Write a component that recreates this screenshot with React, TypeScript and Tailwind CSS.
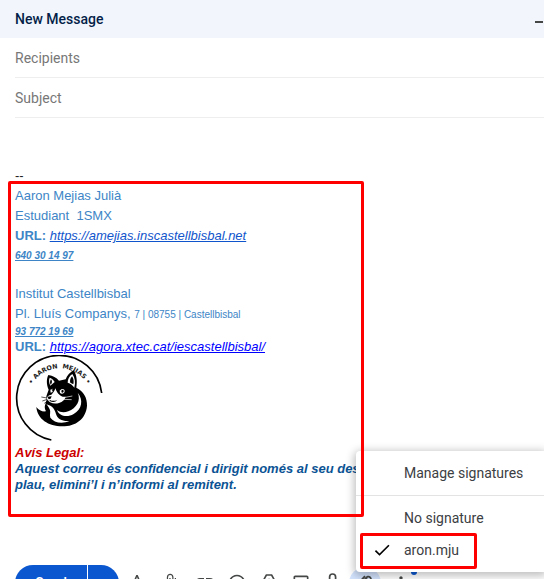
import type { ReactNode } from "react";
import {
  MdAttachFile,
  MdCheck,
  MdInsertLink,
  MdMoreVert,
  MdOutlineImage,
  MdSentimentSatisfiedAlt,
  MdTextFormat,
} from "react-icons/md";

function DriveIcon() {
  return (
    <svg viewBox="0 0 20 20" className="size-5" fill="none" stroke="currentColor" strokeWidth="1.6">
      <path d="M7.4 2h5.2l5.2 9.4-2.6 4.8H4.8l-2.6-4.8zM10 6.4 6.6 12.6h6.8z" strokeLinejoin="round" />
    </svg>
  );
}

function LockIcon() {
  return (
    <svg viewBox="0 0 20 20" className="size-5" fill="none" stroke="currentColor" strokeWidth="1.7">
      <path d="M6.6 8V4a3 3 0 0 1 6 0v4M4 8h11.5v9H4z" />
    </svg>
  );
}

function PenIcon() {
  return (
    <svg viewBox="0 0 20 20" className="size-5" fill="none" stroke="currentColor" strokeWidth="1.8">
      <path d="M4 12.5 10.5 5.5C12 3.6 13.6 3 15 4.2S16.2 7 14.8 8.6L8.5 15 4 16zM6.2 7.2 10 3.2" />
      <path d="M11 5.5 14.5 8.8" />
    </svg>
  );
}

const tools: { name: string; icon: ReactNode; className: string }[] = [
  { name: "Formatting options", icon: <MdTextFormat size={24} />, className: "ml-0.5" },
  { name: "Attach files", icon: <MdAttachFile size={20} />, className: "ml-0.5" },
  { name: "Insert link", icon: <MdInsertLink size={24} />, className: "ml-0.5" },
  { name: "Insert emoji", icon: <MdSentimentSatisfiedAlt size={20} />, className: "" },
  { name: "Insert files using Drive", icon: <DriveIcon />, className: "" },
  { name: "Insert photo", icon: <MdOutlineImage size={20} />, className: "" },
  { name: "Toggle confidential mode", icon: <LockIcon />, className: "" },
  { name: "Insert signature", icon: <PenIcon />, className: "rounded-full bg-[#d3e3fd]" },
  { name: "More options", icon: <MdMoreVert size={20} />, className: "ml-1" },
];

function CatLogo() {
  return (
    <svg viewBox="16 14 264 264" className="block size-[88px]" role="img" aria-label="Aaron Mejias">
      <path d="M276 128A128 128 0 1 0 125 269" fill="none" stroke="#000" strokeWidth="5" />
      <path id="ring" d="M54 150A96 96 0 0 1 246 150" fill="none" />
      <text
        fontSize="19"
        fontWeight="700"
        fontFamily="DejaVu Sans, sans-serif"
        fill="#222"
        className="whitespace-pre"
      >
        <textPath href="#ring" startOffset="50%" textAnchor="middle">• AARON  MEJIAS •</textPath>
      </text>
      <g transform="translate(60 36)">
        <path
          d="M56 38C70 40 80 46 88 55L108 51C112 39 121 30 132 24C142 40 143 58 140 76C162 86 173 107 172 130C169 170 138 192 98 192C56 192 23 170 20 134C28 144 38 149 49 147C45 140 44 133 47 126L51 112L50 102L57 82C50 66 50 50 56 38Z"
          fill="#000"
        />
        {/* ears */}
        <path d="M60 46C67 48 72 53 75 59L62 70C58 62 57 54 60 46Z" fill="#fff" />
        <path d="M64 51C68 56 68 62 63 67C60 62 61 56 64 51Z" fill="#000" />
        <path d="M128 35C118 42 114 51 114 61C122 63 129 68 134 76C138 60 136 46 128 35Z" fill="#fff" />
        <path d="M127 42C121 49 120 56 122 61L131 66C133 57 132 49 127 42Z" fill="#000" />
        {/* face */}
        <path
          d="M77 78C75 87 69 93 65 97C56 98 51 104 51 109C57 121 73 127 88 122C99 118 106 111 108 103C96 106 84 97 77 78Z"
          fill="#fff"
        />
        <path d="M90 85C96 78 104 79 105 86C105 94 96 96 91 92Z" fill="#fff" />
        <path d="M96 83Q103 81 102 88Q98 94 95 89Z" fill="#000" />
        <path d="M62 82L70 79L69 89L63 91Z" fill="#fff" />
        <path d="M66 82L70 80L69 88Z" fill="#000" />
        <path d="M53 103L66 102L63 109L57 111ZM60 112Q71 119 83 112Q75 123 60 116Z" fill="#000" />
        {/* chest and tail */}
        <path
          d="M144 91C155 114 140 137 116 147C102 152 91 150 82 143C89 162 113 166 132 155C157 141 162 112 144 91Z"
          fill="#fff"
        />
        <path
          d="M50 126C69 130 76 143 79 155C83 170 99 178 119 176C96 186 72 180 62 166C59 157 64 148 60 141C57 134 54 130 50 126Z"
          fill="#fff"
        />
        <path d="M102 106L128 101M101 111L126 112" stroke="#fff" strokeWidth="2" />
        <path d="M52 107L35 104M53 111L38 116M56 115L44 123" stroke="#000" strokeWidth="2" />
      </g>
    </svg>
  );
}

function Signature() {
  return (
    <div className="relative mt-0.5 whitespace-nowrap text-[13px] leading-5 text-[#3d85c6]">
      <div>Aaron Mejias Julià</div>
      <div className="whitespace-pre">Estudiant  1SMX</div>
      <div>
        <b>URL: </b>
        <a href="https://amejias.inscastellbisbal.net" className="italic text-[#1155cc] underline">
          https://amejias.inscastellbisbal.net
        </a>
      </div>
      <div className="text-[10px] font-bold italic underline">640 30 14 97</div>
      <div className="mt-[18px]">Institut Castellbisbal</div>
      <div>
        Pl. Lluís Companys, <span className="text-[10px]">7 | 08755 | Castellbisbal</span>
      </div>
      <div className="text-[10px] font-bold italic leading-[14px] underline">93 772 19 69</div>
      <div className="leading-4">
        <b>URL: </b>
        <a href="https://agora.xtec.cat/iescastellbisbal/" className="italic text-[#0000ff] underline">
          https://agora.xtec.cat/iescastellbisbal/
        </a>
      </div>
      <CatLogo />
      <div className="mt-0.5 font-bold italic leading-4 text-[#cc0000]">Avís Legal:</div>
      <div className="font-bold italic leading-4 text-[#0b5394]">
        Aquest correu és confidencial i dirigit només al seu des
        <br />
        plau, elimini’l i n’informi al remitent.
      </div>
      <div className="pointer-events-none absolute -left-[7px] -top-[5px] -bottom-6 z-20 w-[356px] rounded-xs border-3 border-[#ff0000]" />
    </div>
  );
}

function SignatureMenu() {
  return (
    <div
      role="menu"
      className="absolute bottom-[7px] right-0 z-10 w-[188px] rounded-l bg-white text-sm text-[#3c4043] shadow-[0_2px_8px_2px_rgba(0,0,0,0.25)]"
    >
      <div className="border-b border-[#e3e3e3] py-1.5">
        <button role="menuitem" className="flex h-8 w-full items-center whitespace-nowrap pl-12">
          Manage signatures
        </button>
      </div>
      <div className="py-1.5">
        <button role="menuitemradio" aria-checked="false" className="flex h-8 w-full items-center pl-12">
          No signature
        </button>
        <div className="relative">
          <button role="menuitemradio" aria-checked="true" className="flex h-8 w-full items-center pl-4">
            <MdCheck size={20} className="mr-3 text-black" />
            aron.mju
          </button>
          <div className="pointer-events-none absolute -bottom-[3px] -top-px left-1 w-[117px] rounded-xs border-3 border-[#ff0000]" />
        </div>
      </div>
    </div>
  );
}

export default function App() {
  return (
    <div className="relative flex h-screen flex-col overflow-hidden bg-white font-[Roboto,sans-serif]">
      <header className="flex h-[38px] shrink-0 items-center justify-between bg-[#f2f6fc] pl-[15px] pr-px">
        <h1 className="text-sm font-medium text-[#041e49]">New Message</h1>
        <button aria-label="Minimize" className="flex h-5 w-2 items-center pt-1.5">
          <span className="h-0.5 w-full bg-[#444746]" />
        </button>
      </header>
      <div className="shrink-0 pl-[15px]">
        <input
          aria-label="Recipients"
          placeholder="Recipients"
          className="block h-10 w-full border-b border-[#eeeeee] text-sm outline-none placeholder:text-[#777777]"
        />
        <input
          aria-label="Subject"
          placeholder="Subject"
          className="block h-10 w-full border-b border-[#eeeeee] text-sm outline-none placeholder:text-[#777777]"
        />
      </div>
      <main className="h-[447px] shrink-0 px-[15px] pt-[50px] font-['Liberation_Sans',sans-serif]">
        <div className="text-[13px] leading-4 text-[#222222]">--</div>
        <Signature />
      </main>
      <footer className="flex h-9 shrink-0 items-center pl-[15px] text-[#444746]">
        <div className="flex h-9 w-[104px] shrink-0 overflow-hidden rounded-full bg-[#0b57d0] text-sm font-medium text-white">
          <button className="w-[73px] border-r border-white">Send</button>
          <button aria-label="More send options" className="flex-1" />
        </div>
        {tools.map((tool) => (
          <button
            key={tool.name}
            aria-label={tool.name}
            className={`flex size-8 shrink-0 items-center justify-center ${tool.className}`}
          >
            {tool.icon}
          </button>
        ))}
        <span className="-ml-1.5 mb-[22px] size-1.5 rounded-full bg-[#0b57d0]" />
      </footer>
      <SignatureMenu />
    </div>
  );
}
